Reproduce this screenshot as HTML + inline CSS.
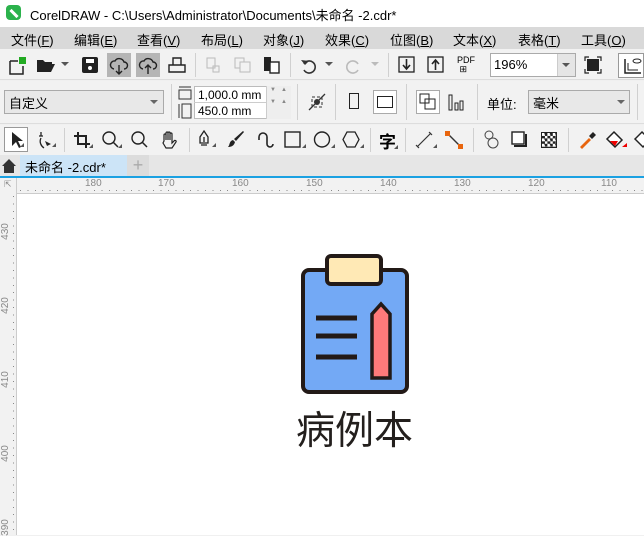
<!DOCTYPE html>
<html><head><meta charset="utf-8"><style>
*{margin:0;padding:0;box-sizing:border-box}
body{width:644px;height:535px;overflow:hidden;background:#f0f0f0;font-family:"Liberation Sans","Noto Sans CJK SC",sans-serif;position:relative;font-size:12px;color:#000}
.a{position:absolute}
.menu span{position:absolute;top:3px;font-size:13px}
.sep{position:absolute;width:1px;background:#d0d0d0}
svg{position:absolute;overflow:visible}
.tick{position:absolute;font-size:10px;color:#888}
</style></head><body>
<!-- title -->
<div class="a" style="left:0;top:0;width:644px;height:27px;background:#fff"></div>
<div class="a" style="left:6px;top:5px;width:15px;height:15px;background:#2bb24c;border-radius:4px"></div>
<div class="a" style="left:9px;top:12px;width:10px;height:3px;background:#fff;transform:rotate(45deg)"></div>
<div class="a" style="left:30px;top:5px;font-size:13px">CorelDRAW - C:\Users\Administrator\Documents\未命名 -2.cdr*</div>
<!-- menu -->
<div class="a menu" style="left:0;top:27px;width:644px;height:22px;background:#d9d9d9">
<span style="left:11px">文件(<u>F</u>)</span><span style="left:74px">编辑(<u>E</u>)</span><span style="left:137px">查看(<u>V</u>)</span><span style="left:201px">布局(<u>L</u>)</span><span style="left:263px">对象(<u>J</u>)</span><span style="left:325px">效果(<u>C</u>)</span><span style="left:390px">位图(<u>B</u>)</span><span style="left:453px">文本(<u>X</u>)</span><span style="left:518px">表格(<u>T</u>)</span><span style="left:581px">工具(<u>O</u>)</span></div>
<!-- toolbar1 -->
<div class="a" style="left:0;top:49px;width:644px;height:31px;background:#f2f2f2;border-bottom:1px solid #ddd"></div>
<svg style="left:8px;top:56px" width="20" height="20"><path d="M2 5h8M2 5v13h13V10" fill="none" stroke="#222" stroke-width="1.5"/><rect x="11" y="1" width="7" height="7" fill="#2a2"/></svg>
<svg style="left:36px;top:58px" width="20" height="16"><path d="M1 2h6l2 2h7v2H5L1 14V2zM5 6h14l-4 8H1z" fill="#222"/></svg>
<svg style="left:61px;top:62px" width="8" height="5"><path d="M0 0h8L4 4z" fill="#555"/></svg>
<svg style="left:82px;top:57px" width="16" height="16"><rect x="0" y="0" width="16" height="16" rx="2" fill="#222"/><rect x="4" y="2" width="8" height="4" fill="#fff"/><circle cx="8" cy="11" r="2" fill="#fff"/></svg>
<div class="a" style="left:107px;top:53px;width:24px;height:24px;background:#b5b5b5"></div>
<div class="a" style="left:136px;top:53px;width:24px;height:24px;background:#b5b5b5"></div>
<svg style="left:110px;top:57px" width="18" height="18"><path d="M4 12a4 4 0 0 1 1-8 5 5 0 0 1 9 1 3.5 3.5 0 0 1 0 7" fill="none" stroke="#222" stroke-width="1.4"/><path d="M9 8v9M6 14l3 3 3-3" fill="none" stroke="#222" stroke-width="1.4"/></svg>
<svg style="left:139px;top:57px" width="18" height="18"><path d="M4 12a4 4 0 0 1 1-8 5 5 0 0 1 9 1 3.5 3.5 0 0 1 0 7" fill="none" stroke="#222" stroke-width="1.4"/><path d="M9 17V8M6 11l3-3 3 3" fill="none" stroke="#222" stroke-width="1.4"/></svg>
<svg style="left:168px;top:57px" width="18" height="16"><path d="M5 8V1h8v7M1 8h16v7H1z" fill="none" stroke="#222" stroke-width="1.4"/></svg>
<div class="sep" style="left:195px;top:53px;height:24px"></div>
<svg style="left:206px;top:57px" width="14" height="16"><rect x="1" y="1" width="8" height="10" fill="none" stroke="#bbb"/><rect x="7" y="9" width="6" height="6" fill="none" stroke="#bbb"/></svg>
<svg style="left:234px;top:57px" width="18" height="16"><rect x="1" y="1" width="9" height="10" fill="none" stroke="#bbb"/><rect x="6" y="5" width="10" height="10" fill="#f2f2f2" stroke="#bbb"/></svg>
<svg style="left:263px;top:56px" width="18" height="18"><rect x="1" y="1" width="7" height="14" fill="#222"/><rect x="7" y="6" width="9" height="11" fill="#fff" stroke="#222" stroke-width="1.4"/></svg>
<div class="sep" style="left:290px;top:53px;height:24px"></div>
<svg style="left:300px;top:57px" width="18" height="18"><path d="M4 7a6 6 0 1 1 0 6" fill="none" stroke="#333" stroke-width="1.6"/><path d="M1 3l4 5 4-4z" fill="#333"/></svg>
<svg style="left:325px;top:62px" width="8" height="5"><path d="M0 0h8L4 4z" fill="#555"/></svg>
<svg style="left:344px;top:57px" width="18" height="18"><path d="M14 7a6 6 0 1 0 0 6" fill="none" stroke="#bbb" stroke-width="1.6"/></svg>
<svg style="left:371px;top:62px" width="8" height="5"><path d="M0 0h8L4 4z" fill="#bbb"/></svg>
<div class="sep" style="left:388px;top:53px;height:24px"></div>
<svg style="left:398px;top:56px" width="18" height="18"><rect x="1" y="1" width="15" height="15" fill="none" stroke="#222" stroke-width="1.3"/><path d="M8.5 3v9M5 9l3.5 4 3.5-4" fill="none" stroke="#222" stroke-width="1.6"/></svg>
<svg style="left:427px;top:56px" width="18" height="18"><rect x="1" y="1" width="15" height="15" fill="none" stroke="#222" stroke-width="1.3"/><path d="M8.5 14V5M5 8l3.5-4 3.5 4" fill="none" stroke="#222" stroke-width="1.6"/></svg>
<div class="a" style="left:457px;top:56px;font-size:9px;line-height:9px">PDF<br>&nbsp;⊞</div>
<div class="a" style="left:490px;top:53px;width:86px;height:24px;background:#fff;border:1px solid #aaa"></div>
<div class="a" style="left:557px;top:54px;width:18px;height:22px;background:#e5e5e5;border-left:1px solid #ccc"></div>
<svg style="left:562px;top:63px" width="8" height="5"><path d="M0 0h8L4 4z" fill="#555"/></svg>
<div class="a" style="left:494px;top:57px;font-size:13px">196%</div>
<svg style="left:584px;top:56px" width="18" height="18"><rect x="3" y="3" width="12" height="12" fill="#222"/><path d="M1 5V1h4M13 1h4v4M17 13v4h-4M5 17H1v-4" fill="none" stroke="#222" stroke-width="1.2"/></svg>
<div class="a" style="left:618px;top:53px;width:26px;height:25px;border:1px solid #999;background:#fff"></div>
<svg style="left:623px;top:57px" width="20" height="18"><path d="M2 2v14h16" fill="none" stroke="#222" stroke-width="1.5"/><path d="M5 6v7h10" fill="none" stroke="#222"/><ellipse cx="14" cy="4" rx="4" ry="2" fill="none" stroke="#222"/></svg>
<!-- toolbar2 -->
<div class="a" style="left:0;top:81px;width:644px;height:43px;background:#f2f2f2;border-bottom:1px solid #ddd"></div>
<div class="a" style="left:4px;top:90px;width:160px;height:24px;background:#e8e8e8;border:1px solid #aaa;font-size:13px;padding:2px 0 0 4px">自定义</div>
<svg style="left:150px;top:100px" width="8" height="5"><path d="M0 0h8L4 4z" fill="#666"/></svg>
<div class="sep" style="left:171px;top:84px;height:36px"></div>
<svg style="left:178px;top:86px" width="14" height="34"><path d="M1 1h12M1 4h12v9H1z" fill="none" stroke="#333"/><path d="M1 18v14M4 18h9v14H4z" fill="none" stroke="#333"/></svg>
<div class="a" style="left:194px;top:86px;width:97px;height:33px;background:#fff;border:1px solid #bbb"></div>
<div class="a" style="left:194px;top:102px;width:97px;height:1px;background:#ccc"></div>
<div class="a" style="left:266px;top:86px;width:1px;height:33px;background:#ccc"></div>
<div class="a" style="left:267px;top:86px;width:24px;height:33px;background:#eee"></div>
<div class="a" style="left:198px;top:88px;font-size:12px">1,000.0 mm</div>
<div class="a" style="left:198px;top:104px;font-size:12px">450.0 mm</div>
<div class="a" style="left:270px;top:87px;font-size:6px;color:#888;letter-spacing:5px">▼▲<br><br>▼▲</div>
<div class="sep" style="left:297px;top:84px;height:36px"></div>
<svg style="left:308px;top:93px" width="18" height="18"><path d="M4 4h10v10H4z" fill="none" stroke="#333" stroke-dasharray="3 2"/><circle cx="9" cy="9" r="3" fill="#333"/><path d="M1 17L7 11M11 7l6-6" stroke="#333" stroke-width="1.3"/></svg>
<div class="sep" style="left:335px;top:84px;height:36px"></div>
<div class="a" style="left:349px;top:93px;width:10px;height:16px;border:1.3px solid #222"></div>
<div class="a" style="left:373px;top:90px;width:24px;height:24px;border:1px solid #aaa;background:#fff"></div>
<div class="a" style="left:377px;top:96px;width:16px;height:12px;border:1.3px solid #222"></div>
<div class="sep" style="left:406px;top:84px;height:36px"></div>
<div class="a" style="left:416px;top:90px;width:24px;height:24px;border:1px solid #aaa;background:#fff"></div>
<svg style="left:419px;top:93px" width="18" height="18"><rect x="1" y="1" width="9" height="9" fill="none" stroke="#222"/><rect x="6" y="6" width="10" height="10" fill="none" stroke="#222"/></svg>
<svg style="left:448px;top:94px" width="18" height="18"><rect x="1" y="1" width="3" height="15" fill="none" stroke="#222"/><rect x="7" y="9" width="3" height="7" fill="none" stroke="#222"/><rect x="12" y="7" width="3" height="9" fill="none" stroke="#222"/></svg>
<div class="sep" style="left:477px;top:84px;height:36px"></div>
<div class="a" style="left:487px;top:94px;font-size:13px">单位:</div>
<div class="a" style="left:528px;top:90px;width:102px;height:24px;background:#e8e8e8;border:1px solid #aaa;font-size:13px;padding:2px 0 0 4px">毫米</div>
<svg style="left:617px;top:100px" width="8" height="5"><path d="M0 0h8L4 4z" fill="#666"/></svg>
<div class="sep" style="left:637px;top:84px;height:36px"></div>
<!-- toolbox -->
<div class="a" style="left:0;top:125px;width:644px;height:30px;background:#f2f2f2"></div>
<div class="a" style="left:4px;top:127px;width:24px;height:25px;border:1px solid #999;background:#fff"></div>
<svg style="left:11px;top:131px" width="14" height="18"><path d="M1 1v14l4-4 3 6 2-1-3-6h5z" fill="#222"/><path d="M9 16h4v-4z" fill="#555"/></svg>
<svg style="left:36px;top:131px" width="20" height="18"><path d="M5 1v4M3 5h4M5 7c-2 4 0 8 3 10" fill="none" stroke="#222" stroke-width="1.3"/><path d="M9 10l6 3-4 2z" fill="#222"/><path d="M16 16h4v-4z" fill="#555"/></svg>
<div class="sep" style="left:64px;top:128px;height:24px"></div>
<svg style="left:73px;top:131px" width="20" height="18"><path d="M5 1v12h12M1 5h12v12" fill="none" stroke="#222" stroke-width="2"/><path d="M16 17h4v-4z" fill="#555"/></svg>
<svg style="left:102px;top:131px" width="20" height="18"><circle cx="7" cy="7" r="6" fill="none" stroke="#222" stroke-width="1.4"/><path d="M11 11l5 5" stroke="#222" stroke-width="1.5"/><path d="M16 17h4v-4z" fill="#555"/></svg>
<svg style="left:131px;top:131px" width="20" height="18"><circle cx="7" cy="7" r="6" fill="none" stroke="#222" stroke-width="1.4"/><path d="M11 11l5 5" stroke="#222" stroke-width="1.5"/></svg>
<svg style="left:160px;top:130px" width="20" height="20"><path d="M4 11V5a1 1 0 0 1 2 0v5V3a1 1 0 0 1 2 0v7V3a1 1 0 0 1 2 0v7V4a1 1 0 0 1 2 0v9l2-2a1 1 0 0 1 2 1l-4 6H6l-3-5z" fill="none" stroke="#222" stroke-width="1.2"/></svg>
<div class="sep" style="left:189px;top:128px;height:24px"></div>
<svg style="left:198px;top:130px" width="20" height="20"><path d="M6 1l4 6v6H2V7z" fill="none" stroke="#222" stroke-width="1.3"/><path d="M6 7v5M3 15h6" stroke="#222" stroke-width="1.3"/><path d="M14 17h4v-4z" fill="#555"/></svg>
<svg style="left:227px;top:130px" width="20" height="20"><path d="M16 1l1 1-8 9-2-2z" fill="#222"/><path d="M6 10l2 2c-1 4-4 5-7 5 2-2 1-6 5-7z" fill="#222"/></svg>
<svg style="left:255px;top:130px" width="20" height="20"><path d="M4 10V7a4 4 0 0 1 8 0v7a3 3 0 0 0 6 0" fill="none" stroke="#222" stroke-width="1.6"/></svg>
<svg style="left:284px;top:131px" width="22" height="18"><rect x="1" y="1" width="15" height="15" fill="none" stroke="#222" stroke-width="1.4"/><path d="M18 17h4v-4z" fill="#555"/></svg>
<svg style="left:313px;top:131px" width="22" height="18"><circle cx="9" cy="8.5" r="7.5" fill="none" stroke="#222" stroke-width="1.4"/><path d="M18 17h4v-4z" fill="#555"/></svg>
<svg style="left:342px;top:131px" width="22" height="18"><path d="M5 1h8l4 7.5-4 7.5H5L1 8.5z" fill="none" stroke="#222" stroke-width="1.3"/><path d="M18 17h4v-4z" fill="#555"/></svg>
<div class="sep" style="left:370px;top:128px;height:24px"></div>
<div class="a" style="left:379px;top:128px;font-size:17px;font-weight:bold">字</div>
<svg style="left:394px;top:145px" width="4" height="4"><path d="M0 4h4V0z" fill="#555"/></svg>
<div class="sep" style="left:405px;top:128px;height:24px"></div>
<svg style="left:415px;top:131px" width="22" height="18"><path d="M2 16L16 2M1 14l3 3M14 1l3 3" stroke="#333" stroke-width="1.2"/><path d="M18 17h4v-4z" fill="#555"/></svg>
<svg style="left:445px;top:131px" width="22" height="18"><path d="M3 3l12 12" stroke="#333" stroke-width="1.4"/><rect x="0" y="0" width="5" height="5" fill="#e8650e"/><rect x="13" y="13" width="5" height="5" fill="#e8650e"/></svg>
<div class="sep" style="left:473px;top:128px;height:24px"></div>
<svg style="left:482px;top:130px" width="22" height="20"><circle cx="7" cy="5" r="4" fill="none" stroke="#444"/><circle cx="11" cy="13" r="5" fill="none" stroke="#444"/></svg>
<svg style="left:511px;top:131px" width="20" height="18"><rect x="1" y="1" width="12" height="12" fill="#fff" stroke="#222" stroke-width="1.4"/><path d="M15 3v12H3" fill="none" stroke="#222" stroke-width="2"/></svg>
<div class="a" style="left:541px;top:132px;width:16px;height:16px;background:repeating-conic-gradient(#222 0 25%,#fff 0 50%) 0 0/5.4px 5.4px;border:1px solid #222"></div>
<div class="sep" style="left:568px;top:128px;height:24px"></div>
<svg style="left:578px;top:131px" width="20" height="18"><path d="M2 16l9-9 2 2-9 9z" fill="#e8650e"/><path d="M11 5l4-4 3 3-4 4z" fill="#222"/></svg>
<svg style="left:606px;top:131px" width="22" height="20"><path d="M8 1l8 8-7 7-8-8z" fill="#fff" stroke="#222" stroke-width="1.5"/><path d="M4 10l8 0-3 5z" fill="#e00"/><path d="M16 16h5v-4z" fill="#e00"/></svg>
<svg style="left:634px;top:131px" width="10" height="20"><path d="M8 1l8 8-7 7-8-8z" fill="#fff" stroke="#222" stroke-width="1.5"/></svg>
<!-- tab bar -->
<div class="a" style="left:0;top:155px;width:644px;height:21px;background:#e6e6e6"></div>
<svg style="left:1px;top:158px" width="16" height="16"><path d="M8 1l7 7h-2v7H3V8H1z" fill="#333"/></svg>
<div class="a" style="left:20px;top:155px;width:107px;height:21px;background:#cce4f7;font-size:13px;padding:2px 0 0 5px">未命名 -2.cdr*</div>
<div class="a" style="left:127px;top:155px;width:22px;height:21px;background:#dcdcdc;color:#aaa;font-size:18px;text-align:center;line-height:20px">+</div>
<div class="a" style="left:0;top:176px;width:644px;height:2px;background:#1ba1e2"></div>
<!-- rulers -->
<div class="a" style="left:0;top:178px;width:644px;height:16px;background:#f2f2f2;border-bottom:1px solid #ccc"></div>
<div class="a" style="left:0;top:178px;width:17px;height:357px;background:#f2f2f2;border-right:1px solid #ccc"></div>
<div class="a" style="left:17px;top:194px;width:627px;height:341px;background:#fff"></div>
<div class="a" style="left:20px;top:190px;width:624px;height:1px;background:repeating-linear-gradient(90deg,#888 0 1px,transparent 1px 7.4px)"></div>
<div class="a" style="left:13px;top:196px;width:1px;height:339px;background:repeating-linear-gradient(180deg,#888 0 1px,transparent 1px 7.4px)"></div>
<div class="tick" style="left:85px;top:178px">180</div><div class="tick" style="left:158px;top:178px">170</div><div class="tick" style="left:232px;top:178px">160</div><div class="tick" style="left:306px;top:178px">150</div><div class="tick" style="left:380px;top:178px">140</div><div class="tick" style="left:454px;top:178px">130</div><div class="tick" style="left:528px;top:178px">120</div><div class="tick" style="left:601px;top:178px">110</div>
<div class="tick" style="left:-3px;top:226px;transform:rotate(-90deg)">430</div>
<div class="tick" style="left:-3px;top:300px;transform:rotate(-90deg)">420</div>
<div class="tick" style="left:-3px;top:374px;transform:rotate(-90deg)">410</div>
<div class="tick" style="left:-3px;top:448px;transform:rotate(-90deg)">400</div>
<div class="tick" style="left:-3px;top:522px;transform:rotate(-90deg)">390</div>
<div class="tick" style="left:4px;top:179px;font-size:9px">⇱</div>
<!-- icon -->
<svg style="left:290px;top:250px" width="130" height="150">
<rect x="13" y="20" width="104" height="122" rx="6" fill="#73a9f5" stroke="#231a17" stroke-width="4"/>
<rect x="37" y="6" width="54" height="28" rx="4" fill="#ffe9b5" stroke="#231a17" stroke-width="4"/>
<path d="M26 68h41M26 86h41M26 107h41" stroke="#231a17" stroke-width="5"/>
<path d="M82 128V64l9-10 9 10v64z" fill="#fe7a7a" stroke="#231a17" stroke-width="3.5"/>
</svg>
<div class="a" style="left:296px;top:404px;font-size:39px;line-height:48px;color:#231f1d;font-family:'Noto Sans CJK SC',sans-serif">病例本</div>
</body></html>
